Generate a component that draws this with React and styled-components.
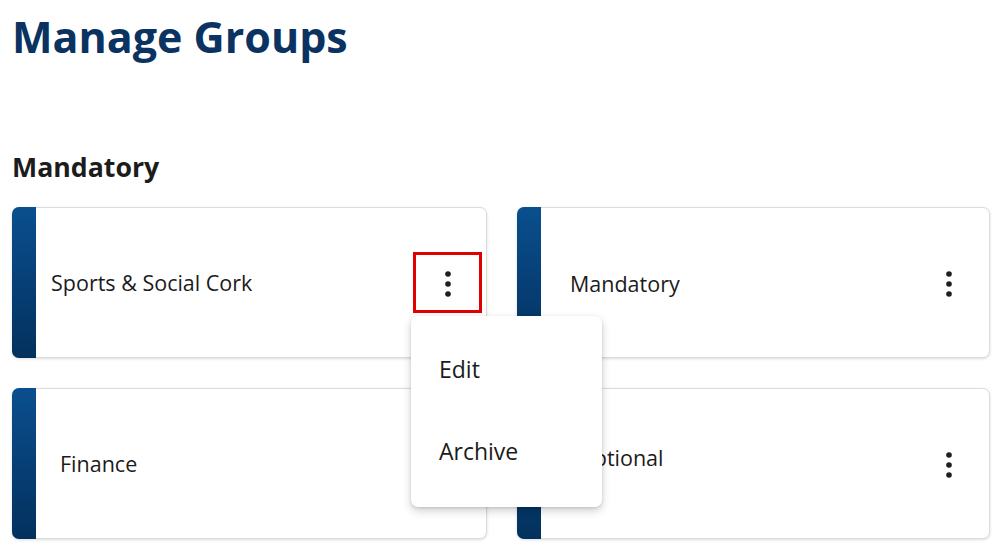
import React from "react";
import styled, { createGlobalStyle } from "styled-components";

const Global = createGlobalStyle`
  html, body { margin: 0; padding: 0; background: #ffffff; }
  body { font-family: "Open Sans", "Noto Sans", sans-serif; color: #1b1b1b; }
  * { box-sizing: border-box; }
`;

const Page = styled.main`
  width: 1000px;
  height: 553px;
  overflow: hidden;
  padding: 0 10px 0 12px;
`;

const Title = styled.h1`
  margin: 0;
  padding-top: 9px;
  font-size: 43px;
  line-height: 56px;
  font-weight: 700;
  color: #0b3361;
  letter-spacing: 0;
`;

const SectionTitle = styled.h2`
  margin: 84px 0 0;
  font-size: 26.7px;
  line-height: 36px;
  font-weight: 700;
  color: #1c1c1c;
`;

const Grid = styled.div`
  display: grid;
  grid-template-columns: 475px 473px;
  column-gap: 30px;
  row-gap: 30px;
  margin-top: 22px;
`;

const Card = styled.div`
  position: relative;
  z-index: ${(p) => (p.$raised ? 5 : "auto")};
  display: flex;
  height: 151px;
  background: #ffffff;
  border: 1px solid #dcdcdc;
  border-radius: 7px;
  box-shadow: 0 1px 3px rgba(0, 0, 0, 0.14);
`;

const Bar = styled.div`
  flex: 0 0 24px;
  margin: -1px 0 -1px -1px;
  border-radius: 7px 0 0 7px;
  background: linear-gradient(180deg, #0a4f8e 0%, #063e74 55%, #03315d 100%);
`;

const Body = styled.div`
  flex: 1;
  display: flex;
  align-items: center;
  justify-content: space-between;
  padding-left: ${(p) => p.$indent}px;
  padding-right: 6px;
`;

const Label = styled.span`
  font-size: 21.5px;
  line-height: 28px;
  color: #1b1b1b;
  transform: translateY(${(p) => p.$shift || 0}px);
`;

const KebabButton = styled.button`
  position: relative;
  width: 69px;
  height: 61px;
  margin-right: ${(p) => (p.$focused ? -2 : 0)}px;
  display: flex;
  align-items: center;
  justify-content: center;
  background: transparent;
  border: 3px solid ${(p) => (p.$focused ? "#e00000" : "transparent")};
  border-radius: 0;
  padding: 0;
  cursor: pointer;
`;

const DotsSvg = styled.svg`
  display: block;
  margin-top: 2px;
`;

const Menu = styled.div`
  position: absolute;
  top: 61px;
  left: -5px;
  width: 191px;
  height: 191px;
  padding: 12px 0 15px;
  background: #ffffff;
  border-radius: 7px;
  box-shadow: 0 4px 10px rgba(0, 0, 0, 0.18), 0 1px 3px rgba(0, 0, 0, 0.12);
  z-index: 10;
  text-align: left;
  cursor: default;
`;

const MenuItem = styled.div`
  height: 82px;
  display: flex;
  align-items: center;
  padding-left: 28px;
  font-family: "Open Sans", "Noto Sans", sans-serif;
  font-size: 23px;
  color: #1b1b1b;
`;

const Dots = () => (
  <DotsSvg width="8" height="28" viewBox="0 0 8 28" aria-hidden="true">
    <circle cx="4" cy="4" r="2.8" fill="#1f1f1f" />
    <circle cx="4" cy="14" r="2.8" fill="#1f1f1f" />
    <circle cx="4" cy="24" r="2.8" fill="#1f1f1f" />
  </DotsSvg>
);

const groups = [
  { name: "Sports & Social Cork", indent: 15, shift: 0, focused: true },
  { name: "Mandatory", indent: 29, shift: 1 },
  { name: "Finance", indent: 24, shift: 0 },
  { name: "Optional", indent: 36, shift: -6 },
];

export default function App() {
  return (
    <>
      <Global />
      <Page>
        <Title>Manage Groups</Title>
        <SectionTitle>Mandatory</SectionTitle>
        <Grid>
          {groups.map((g) => (
            <Card key={g.name} $raised={g.focused}>
              <Bar />
              <Body $indent={g.indent}>
                <Label $shift={g.shift}>{g.name}</Label>
                <KebabButton $focused={g.focused} aria-label="More options">
                  <Dots />
                  {g.focused && (
                    <Menu>
                      <MenuItem>Edit</MenuItem>
                      <MenuItem>Archive</MenuItem>
                    </Menu>
                  )}
                </KebabButton>
              </Body>
            </Card>
          ))}
        </Grid>
      </Page>
    </>
  );
}
